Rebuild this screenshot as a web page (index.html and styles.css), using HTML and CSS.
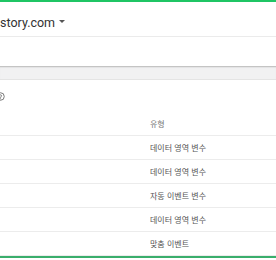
FILE: index.html
```html
<!DOCTYPE html>
<html lang="ko">
<head>
<meta charset="utf-8">
<link rel="stylesheet" href="styles.css">
</head>
<body>
<div class="page">
  <header class="topbar">
    <div class="account">
      <span class="domain">story.com</span>
      <span class="caret"></span>
    </div>
  </header>
  <div class="subbar"></div>
  <div class="band"></div>
  <section class="card">
    <div class="card-title">
      <svg class="help" width="9" height="9" viewBox="0 0 24 24"><circle cx="12" cy="12" r="10" fill="none" stroke="#6b6b6b" stroke-width="2.4"/><path d="M9.2 9.3a2.9 2.9 0 0 1 5.6 1c0 1.9-2.8 2.4-2.8 4.2" fill="none" stroke="#6b6b6b" stroke-width="2.4" stroke-linecap="round"/><circle cx="12" cy="17.8" r="1.4" fill="#6b6b6b"/></svg>
    </div>
    <div class="row head"><span class="cell">유형</span></div>
    <div class="row"><span class="cell">데이터 영역 변수</span></div>
    <div class="row"><span class="cell">데이터 영역 변수</span></div>
    <div class="row"><span class="cell">자동 이벤트 변수</span></div>
    <div class="row"><span class="cell">데이터 영역 변수</span></div>
    <div class="row"><span class="cell">맞춤 이벤트</span></div>
  </section>
  <div class="footer-line"></div>
</div>
</body>
</html>
```

FILE: styles.css
```css
html, body {
  margin: 0;
  padding: 0;
  background: #ffffff;
  overflow: hidden;
}
.page {
  width: 276px;
  height: 260px;
  display: flex;
  flex-direction: column;
  font-family: Roboto, "Noto Sans CJK KR", sans-serif;
}
.topbar {
  border-top: 2px solid #1fc564;
  height: 34px;
  border-bottom: 1px solid #ebebeb;
  display: flex;
  align-items: center;
}
.account {
  display: flex;
  align-items: center;
  padding-top: 7px;
  gap: 4px;
}
.domain {
  font-size: 12.5px;
  color: #333;
  line-height: 16px;
}
.caret {
  width: 0;
  height: 0;
  border-left: 3px solid transparent;
  border-right: 3px solid transparent;
  border-top: 3px solid #555;
  margin-top: -2px;
}
.subbar {
  height: 29px;
  background: #fff;
}
.band {
  height: 12px;
  background: #f1f1f2;
  border-top: 1px solid #c4c4c4;
  border-bottom: 1px solid #e4e4e4;
  box-shadow: inset 0 1px 1px rgba(0,0,0,0.06);
}
.card {
  display: flex;
  flex-direction: column;
  background: #fff;
}
.card-title {
  height: 32px;
  display: flex;
  align-items: center;
}
.help {
  margin-left: -4px;
}
.row {
  height: 23px;
  border-bottom: 1px solid #ececec;
  display: flex;
  align-items: center;
  padding-left: 150px;
}
.cell {
  font-family: "Noto Sans CJK KR", sans-serif;
  font-size: 8px;
  color: #555;
  line-height: 10px;
}
.head .cell {
  color: #777;
}
.footer-line {
  height: 2px;
  background: #3aae6c;
}
```
